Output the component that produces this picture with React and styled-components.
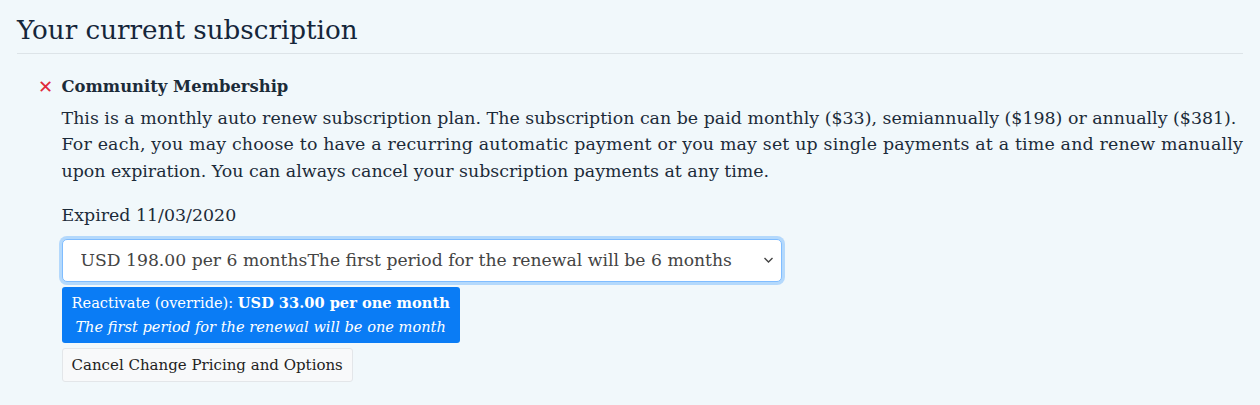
import React from 'react';
import styled, { createGlobalStyle } from 'styled-components';

const Global = createGlobalStyle`
  body {
    margin: 0;
    background: #f1f8fb;
    font-family: 'DejaVu Serif', 'Liberation Serif', serif;
    color: #1c2b39;
  }
`;

const Page = styled.div({
  padding: '12px 17px 20px 17px',
});

const Heading = styled.h2({
  margin: 0,
  fontSize: '26.2px',
  fontWeight: 400,
  lineHeight: '36px',
  paddingBottom: '5px',
  borderBottom: '1px solid #dde4e8',
  color: '#15263a',
});

const Plan = styled.div({
  display: 'flex',
  marginTop: '20px',
  paddingLeft: '21px',
});

const Mark = styled.span({
  color: '#e0283a',
  fontSize: '18px',
  width: '24px',
  lineHeight: '26px',
  fontFamily: "'DejaVu Sans', sans-serif",
});

const Body = styled.div({
  flex: 1,
  fontSize: '17.4px',
  lineHeight: '26.5px',
});

const Title = styled.div({
  fontWeight: 700,
  fontSize: '16.4px',
  marginBottom: '4px',
});

const Text = styled.p({
  margin: 0,
  whiteSpace: 'nowrap',
});

const Line = styled.span`
  display: block;
  letter-spacing: ${(p) => p.$spread || 0}px;
`;

const Expired = styled.p({
  margin: '18px 0 10px 0',
});

const SelectWrap = styled.div({
  position: 'relative',
  width: '720px',
});

const Select = styled.select({
  display: 'block',
  width: '100%',
  height: '43px',
  padding: '0 30px 0 18px',
  fontFamily: 'inherit',
  fontSize: '17.2px',
  color: '#444',
  background: '#fff',
  border: '1px solid #80bdff',
  borderRadius: '5px',
  boxShadow: '0 0 0 3px rgba(0, 123, 255, 0.25)',
  outline: 'none',
  appearance: 'none',
});

const Chevron = styled.svg({
  position: 'absolute',
  right: '8px',
  top: '17px',
  width: '11px',
  height: '8px',
  pointerEvents: 'none',
});

const Primary = styled.button({
  display: 'block',
  marginTop: '5px',
  padding: '4px 10px',
  background: '#0a7cf5',
  color: '#fff',
  border: 'none',
  borderRadius: '3px',
  fontFamily: 'inherit',
  fontSize: '14.6px',
  lineHeight: '24px',
  textAlign: 'center',
});

const Cancel = styled.button({
  display: 'block',
  marginTop: '5px',
  padding: '4px 9px',
  background: '#f8f9fa',
  color: '#222',
  border: '1px solid #e3e6e9',
  borderRadius: '3px',
  fontFamily: 'inherit',
  fontSize: '15px',
  lineHeight: '24px',
});

export default function App() {
  return (
    <>
      <Global />
      <Page>
        <Heading>Your current subscription</Heading>
        <Plan>
          <Mark>✕</Mark>
          <Body>
            <Title>Community Membership</Title>
            <Text>
              <Line>This is a monthly auto renew subscription plan. The subscription can be paid monthly ($33), semiannually ($198) or annually ($381).</Line>
              <Line $spread={0.17}>For each, you may choose to have a recurring automatic payment or you may set up single payments at a time and renew manually</Line>
              <Line>upon expiration. You can always cancel your subscription payments at any time.</Line>
            </Text>
            <Expired>Expired 11/03/2020</Expired>
            <SelectWrap>
              <Select defaultValue="6">
                <option value="6">USD 198.00 per 6 monthsThe first period for the renewal will be 6 months</option>
              </Select>
              <Chevron viewBox="0 0 11 8">
                <path d="M1.5 2 L5.5 6 L9.5 2" fill="none" stroke="#444" strokeWidth="1.4" />
              </Chevron>
            </SelectWrap>
            <Primary>
              Reactivate (override): <b>USD 33.00 per one month</b>
              <br />
              <i>The first period for the renewal will be one month</i>
            </Primary>
            <Cancel>Cancel Change Pricing and Options</Cancel>
          </Body>
        </Plan>
      </Page>
    </>
  );
}
